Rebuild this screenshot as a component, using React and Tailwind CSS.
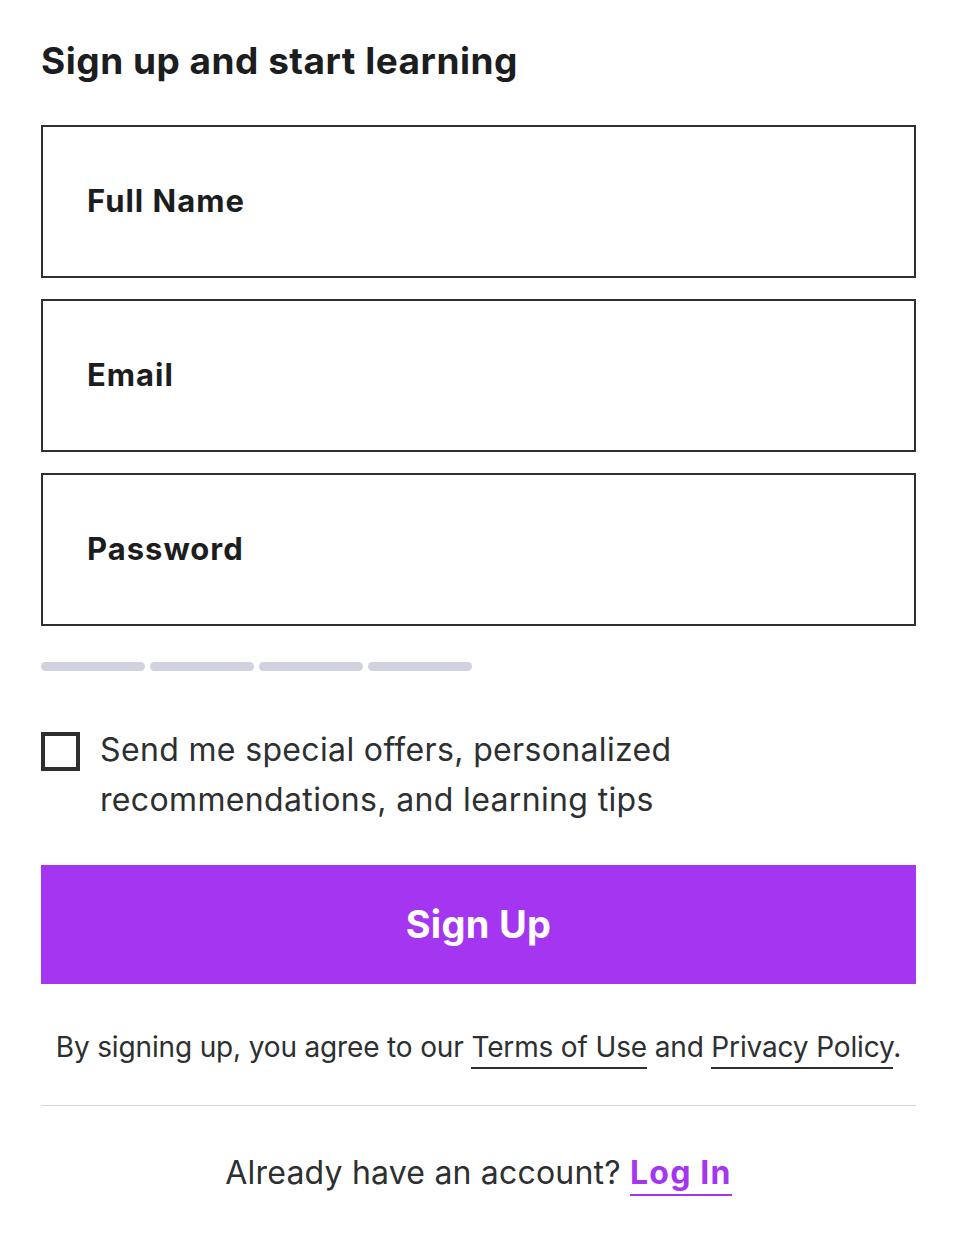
import React from 'react';

const Field = ({ label }) => (
  <div className="flex h-[153px] items-center border-2 border-[#2d2f31] pl-[44px]">
    <span className="text-[31px] font-bold tracking-[1px] text-[#1c1d1f]">{label}</span>
  </div>
);

const App = () => {
  return (
    <div
      className="min-h-[1244px] w-[960px] bg-white pl-[41px] pt-[36px] text-[#2d2f31]"
      style={{ fontFamily: 'Inter, "Liberation Sans", sans-serif' }}
    >
      <div className="w-[875px]">
        <h1 className="text-[37px] font-bold leading-[50px] tracking-[0.5px] text-[#1c1d1f]">
          Sign up and start learning
        </h1>

        <div className="mt-[39px] flex flex-col gap-[21px]">
          <Field label="Full Name" />
          <Field label="Email" />
          <Field label="Password" />
        </div>

        {/* password strength */}
        <div className="mt-[36px] flex gap-[5px]">
          <div className="h-[9px] w-[104px] rounded-full bg-[#d1d2e0]" />
          <div className="h-[9px] w-[104px] rounded-full bg-[#d1d2e0]" />
          <div className="h-[9px] w-[104px] rounded-full bg-[#d1d2e0]" />
          <div className="h-[9px] w-[104px] rounded-full bg-[#d1d2e0]" />
        </div>

        <label className="mt-[54px] flex items-start gap-[20px]">
          <span className="mt-[7px] h-[39px] w-[39px] shrink-0 border-4 border-[#2d2f31]" />
          <span className="text-[32px] leading-[50px] tracking-[0.35px]">
            Send me special offers, personalized
            <br />
            recommendations, and learning tips
          </span>
        </label>

        <button className="mt-[40px] flex h-[119px] w-full items-center justify-center bg-[#a435f0] text-[38px] font-bold tracking-[0.3px] text-white">
          Sign Up
        </button>

        <p className="mt-[43px] text-center text-[28px] leading-[40px] tracking-[-0.15px]">
          By signing up, you agree to our{' '}
          <a className="border-b-2 border-[#2d2f31] pb-[3px]">Terms of Use</a> and{' '}
          <a className="border-b-2 border-[#2d2f31] pb-[3px]">Privacy Policy</a>.
        </p>

        <div className="mt-[38px] h-px bg-[#d1d7dc]" />

        <p className="mt-[45px] text-center text-[32px] leading-[44px] tracking-[0.2px]">
          Already have an account?{' '}
          <a className="border-b-2 border-[#a435f0] pb-[2px] font-bold tracking-[1.2px] text-[#a435f0]">Log In</a>
        </p>
      </div>
    </div>
  );
};

export default App;
